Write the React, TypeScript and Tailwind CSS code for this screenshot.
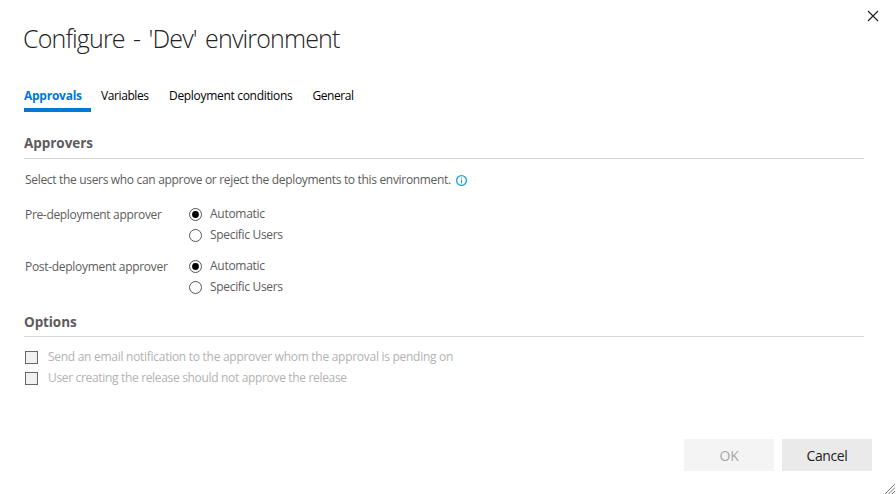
import React from "react";

const tabs = [
  { label: "Variables", cls: "w-[68px]", text: "tracking-[-0.4px]" },
  { label: "Deployment conditions", cls: "w-[143.5px]", text: "tracking-[-0.31px]" },
  { label: "General", cls: "w-[60px]", text: "tracking-[-0.45px]" },
];

function Radio({ label, checked, tracking }: { label: string; checked?: boolean; tracking: string }) {
  return (
    <label className="flex h-[21px] items-center">
      <svg width="13" height="13" viewBox="0 0 13 13" className="mt-px mr-2 shrink-0">
        <circle cx="6.5" cy="6.5" r="6" fill="#fff" stroke="#555" />
        {checked && <circle cx="6.5" cy="6.5" r="3.4" fill="#000" />}
      </svg>
      <span className={tracking}>{label}</span>
    </label>
  );
}

function ApproverRow({ label, tracking }: { label: string; tracking: string }) {
  return (
    <div className="flex h-[52px] pl-px">
      <div className={`w-[164px] pt-[2px] leading-[20px] ${tracking}`}>{label}</div>
      <div>
        <Radio label="Automatic" checked tracking="tracking-[-0.28px]" />
        <Radio label="Specific Users" tracking="tracking-[-0.32px]" />
      </div>
    </div>
  );
}

function Option({ label, tracking }: { label: string; tracking: string }) {
  return (
    <label className="flex h-[21px] items-center pl-px text-[#b2b2b2]">
      <span className="mt-px mr-[10px] h-[13px] w-[13px] shrink-0 border border-[#666] bg-[#f0f0f0]" />
      <span className={tracking}>{label}</span>
    </label>
  );
}

export default function App() {
  return (
    <div className="relative flex h-[494px] w-[896px] flex-col overflow-hidden bg-white pl-6 pr-8 font-['Open_Sans','Noto_Sans',sans-serif] text-xs whitespace-nowrap text-[#5c5c5c]">
      <button className="absolute top-[10px] right-[17px]" aria-label="Close">
        <svg width="12" height="12" viewBox="0 0 12 12" stroke="#222" strokeWidth="1.2">
          <path d="M1 1 11 11M11 1 1 11" />
        </svg>
      </button>
      <h1 className="-ml-px mt-[20px] h-[36px] text-[25px] leading-[36px] font-light text-[#222]">
        <span className="tracking-[-0.85px] [word-spacing:2.7px]">Configure - 'Dev' environment</span>
      </h1>
      <nav className="mt-[30px] flex h-[26px] text-black">
        <div className="mr-[10px] h-[26px] w-[67px] border-b-4 border-[#0078d4] leading-[20px] font-bold text-[#0078d4]">
          <span className="tracking-[-0.25px]">Approvals</span>
        </div>
        {tabs.map((t) => (
          <div key={t.label} className={`leading-[20px] ${t.cls}`}>
            <span className={t.text}>{t.label}</span>
          </div>
        ))}
      </nav>
      <h2 className="mt-[21px] h-[26px] w-[840px] border-b border-[#d6d6d6] text-[13.5px] leading-[20px] font-bold">
        <span className="tracking-[-0.05px]">Approvers</span>
      </h2>
      <p className="mt-[11px] flex h-[20px] items-center pl-px">
        <span className="tracking-[-0.32px]">Select the users who can approve or reject the deployments to this environment.</span>
        <svg width="12" height="12" viewBox="0 0 12 12" className="ml-[5px]" fill="none" stroke="#1ba1e2">
          <circle cx="5.5" cy="6.5" r="4.9" strokeWidth="1.3" />
          <path d="M5.5 5.5v4M5.5 3.5v1" />
        </svg>
      </p>
      <div className="mt-[13px]">
        <ApproverRow label="Pre-deployment approver" tracking="tracking-[-0.33px]" />
        <ApproverRow label="Post-deployment approver" tracking="tracking-[-0.3px]" />
      </div>
      <h2 className="mt-[5px] h-[25px] w-[840px] border-b border-[#d6d6d6] text-[13.5px] leading-[20px] font-bold">
        <span className="tracking-[-0.1px]">Options</span>
      </h2>
      <div className="mt-[9px]">
        <Option label="Send an email notification to the approver whom the approval is pending on" tracking="tracking-[-0.28px]" />
        <Option label="User creating the release should not approve the release" tracking="tracking-[-0.33px]" />
      </div>
      <div className="mt-[51px] -mr-2 flex justify-end gap-2 text-[14px]">
        <button className="h-8 w-[90px] bg-[#f4f4f4] pt-[2px] tracking-[-0.3px] text-[#a6a6a6]">OK</button>
        <button className="h-8 w-[90px] bg-[#eaeaea] pt-[2px] tracking-[-0.4px] text-[#222]">Cancel</button>
      </div>
      <svg className="absolute right-px bottom-0" width="10" height="10" viewBox="0 0 10 10" stroke="#777">
        <path d="M0 10 10 0M3.5 10 10 3.5M7 10 10 7" />
      </svg>
    </div>
  );
}
